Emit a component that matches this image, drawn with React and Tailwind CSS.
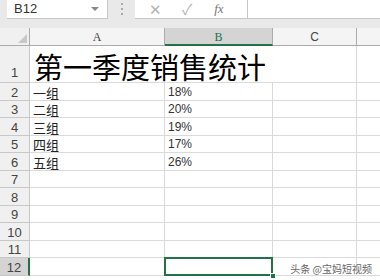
import React from "react";

const rows = [
  { n: 2, a: "一组", b: "18%" },
  { n: 3, a: "二组", b: "20%" },
  { n: 4, a: "三组", b: "19%" },
  { n: 5, a: "四组", b: "17%" },
  { n: 6, a: "五组", b: "26%" },
  { n: 7 },
  { n: 8 },
  { n: 9 },
  { n: 10 },
  { n: 11 },
  { n: 12, sel: true },
];

const cell = "border-r border-b border-[#dadada]";
const rowHead = "flex items-end justify-center pb-[1px] border-r border-b border-[#c8c8c8] bg-[#f0f0f0] text-[13px] text-[#444] leading-none";

export default function App() {
  return (
    <div className="w-[380px] h-[280px] overflow-hidden bg-white relative font-['Liberation_Sans','Noto_Sans_CJK_SC',sans-serif]">
      {/* formula bar */}
      <div className="h-[28px] bg-[#e9e9e9] flex items-start">
        <div className="ml-[7px] w-[101px] h-[19px] bg-white border-r border-b border-[#c6c6c6] flex items-center pl-[7px] pr-[8px]">
          <span className="text-[13px] text-[#333] flex-1">B12</span>
          <span className="w-0 h-0 border-l-[4px] border-r-[4px] border-t-[4px] border-l-transparent border-r-transparent border-t-[#888]" />
        </div>
        <div className="ml-[13px] mt-[3px] flex flex-col gap-[3px]">
          <span className="w-[2px] h-[2px] bg-[#aaa]" />
          <span className="w-[2px] h-[2px] bg-[#aaa]" />
          <span className="w-[2px] h-[2px] bg-[#aaa]" />
        </div>
        <div className="ml-[12px] w-[112px] h-[19px] bg-white border-b border-[#c6c6c6] flex items-center text-[#b5b5b5]">
          <span className="ml-[14px] text-[15px] leading-none">✕</span>
          <span className="ml-[20px] text-[15px] leading-none">✓</span>
          <span className="ml-[22px] text-[13px] italic font-['Liberation_Serif',serif] text-[#777]">fx</span>
        </div>
        <div className="flex-1 h-[19px] bg-white border-l border-b border-[#c6c6c6]" />
      </div>

      {/* sheet */}
      <div className="grid grid-cols-[30px_135px_108px_84px_1fr] grid-rows-[18px_37px_repeat(11,17.5px)]">
        {/* column headers */}
        <div className="bg-[#f0f0f0] border-r border-b border-[#ababab] relative">
          <span className="absolute right-[2px] bottom-[2px] w-0 h-0 border-l-[9px] border-t-[9px] border-l-transparent border-t-transparent border-r-0 border-b-[9px] border-b-[#c8c8c8]" />
        </div>
        <div className="bg-[#f4f4f4] border-r border-b border-[#ababab] flex items-end justify-center text-[12px] text-[#444] font-['Liberation_Serif',serif] leading-none pb-[2px]">A</div>
        <div className="bg-[#d4d4d4] border-r border-[#ababab] border-b-2 border-b-[#217346] flex items-end justify-center text-[12px] text-[#217346] font-['Liberation_Serif',serif] leading-none pb-[1px]">B</div>
        <div className="bg-[#f4f4f4] border-r border-b border-[#ababab] flex items-end justify-center text-[12px] text-[#444] leading-none pb-[2px]">C</div>
        <div className="bg-[#f4f4f4] border-b border-[#ababab]" />

        {/* row 1 */}
        <div className={rowHead + " pb-[3px]"}>1</div>
        <div className="col-span-2 flex items-end pl-[4px] border-b border-[#dadada]">
          <span className="text-[29px] leading-[32px] text-black font-['Noto_Sans_CJK_SC',sans-serif]">第一季度销售统计</span>
        </div>
        <div className={cell} />
        <div className="border-b border-[#dadada]" />

        {rows.map((r) => (
          <React.Fragment key={r.n}>
            <div className={rowHead + (r.sel ? " !bg-[#d4d4d4] !border-r-2 !border-r-[#217346]" : "")}>{r.n}</div>
            <div className={cell + " flex items-end pl-[3px] text-[13px] leading-none text-[#222] font-['Noto_Sans_CJK_SC',sans-serif] pb-[1px]"}>{r.a}</div>
            <div className={cell + " relative flex items-end pl-[3px] text-[12px] leading-none text-[#333] pb-[2px]"}>
              {r.b}
              {r.sel && (
                <>
                  <span className="absolute left-[-1px] top-[-1px] right-[-1px] bottom-[-1px] border-2 border-[#217346]" />
                  <span className="absolute right-[-4px] bottom-[-4px] w-[6px] h-[6px] bg-[#217346] border border-white" />
                </>
              )}
            </div>
            <div className={cell} />
            <div className="border-b border-[#dadada]" />
          </React.Fragment>
        ))}
      </div>

      <div className="absolute right-[8px] bottom-[6px] text-[10px] leading-none text-[#666] font-['Noto_Sans_CJK_SC',sans-serif] [text-shadow:0_0_2px_#fff]">头条 @宝妈短视频</div>
    </div>
  );
}
